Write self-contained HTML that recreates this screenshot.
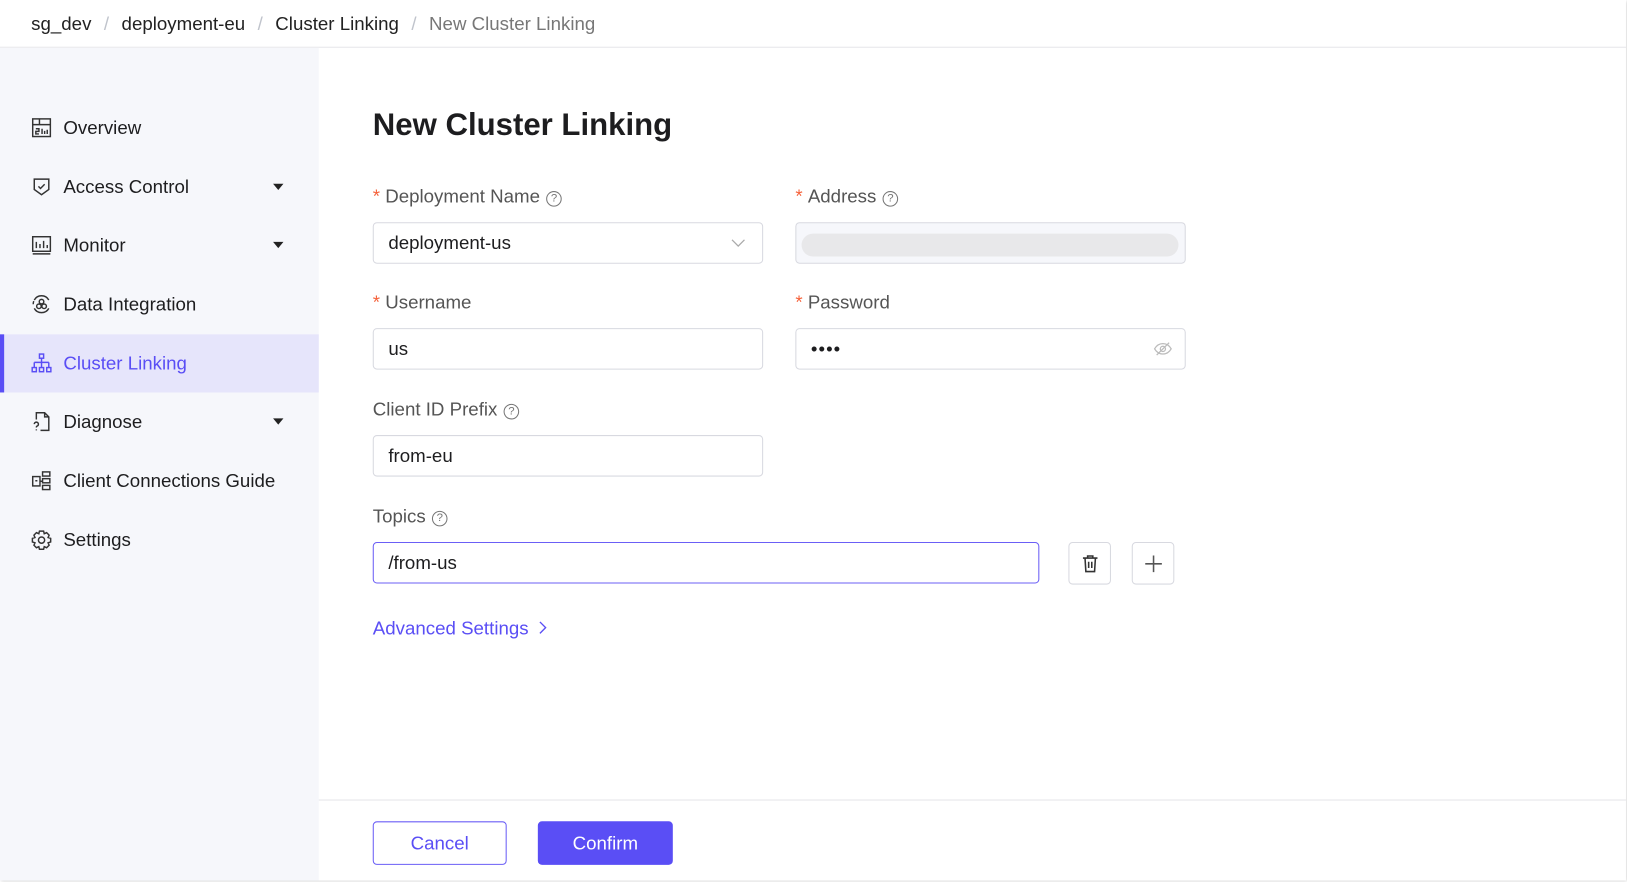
<!DOCTYPE html>
<html><head><meta charset="utf-8"><style>
*{box-sizing:border-box;margin:0;padding:0}
body{width:1627px;height:881px;background:#fff;font-family:"Liberation Sans",sans-serif;position:relative;overflow:hidden;color:#1d1d1f}
.wrap{position:absolute;left:0;top:0;width:1567px;height:849px;transform:scale(1.0383);transform-origin:0 0}
.page{position:absolute;left:0;top:0;width:1566px;height:848px;background:#fff;box-shadow:1px 1px 3px rgba(0,0,0,.18)}
.hdr{position:absolute;left:0;top:0;width:1566px;height:46px;border-bottom:1px solid #e6e6ea;font-size:18px;line-height:46px;padding-left:30px;color:#222}
.hdr .sep{color:#c0c4cc;margin:0 12px}
.hdr .cur{color:#777}
.side{position:absolute;left:0;top:46px;width:307px;height:802px;background:#f6f7fb}
.item{position:absolute;left:0;width:307px;height:56px;display:flex;align-items:center;font-size:18px;color:#1d1d1f}
.item svg{position:absolute;left:30px}
.item span{position:absolute;left:61px}
.item .car{position:absolute;left:263px;width:0;height:0;border-left:5px solid transparent;border-right:5px solid transparent;border-top:6px solid #222}
.item.act{background:#e6e5fb;color:#5a4ef5;border-left:4px solid #5a4ef5}
h1{position:absolute;left:359px;top:104px;font-size:30px;font-weight:bold;color:#1d1d1f}
.lbl{position:absolute;font-size:18px;color:#555}
.lbl .req{color:#f5613a;margin-right:5px}
.q{display:inline-block;width:15px;height:15px;border:1.3px solid #777;border-radius:50%;font-size:11px;line-height:13px;text-align:center;color:#777;margin-left:6px;vertical-align:1px}
.inp{position:absolute;height:40px;border:1px solid #d8d9e0;border-radius:4px;font-size:18px;line-height:38px;padding-left:14px;color:#1d1d1f}
.btn{position:absolute;border-radius:4px;text-align:center;font-size:18px}
</style></head><body>
<div class="wrap">
<div class="page">
<div class="hdr">sg_dev<span class="sep">/</span>deployment-eu<span class="sep">/</span>Cluster Linking<span class="sep">/</span><span class="cur">New Cluster Linking</span></div>
<div class="side">
 <div class="item" style="top:49px"><svg width="20" height="20" viewBox="0 0 20 20" fill="none" stroke="#333" stroke-width="1.4"><rect x="1.5" y="1.5" width="17" height="17"/><path d="M1.5 7h17M8 1.5v5.5M4.5 11h3v2.5h-3v2.5h3M10.5 11v5M13 13v3M15.5 12v4"/></svg><span>Overview</span></div>
 <div class="item" style="top:106px"><svg width="20" height="20" viewBox="0 0 20 20" fill="none" stroke="#333" stroke-width="1.4"><path d="M3 2.5h14v10l-7 5-7-5z"/><path d="M7 9.5l2 2 4-4"/></svg><span>Access Control</span><i class="car"></i></div>
 <div class="item" style="top:162px"><svg width="20" height="20" viewBox="0 0 20 20" fill="none" stroke="#333" stroke-width="1.4"><rect x="1.5" y="2" width="17" height="14"/><path d="M1.5 18.5h17M5 7v6M8.5 9v4M12 6v7M15.5 10v3"/></svg><span>Monitor</span><i class="car"></i></div>
 <div class="item" style="top:219px"><svg width="20" height="20" viewBox="0 0 20 20" fill="none" stroke="#333" stroke-width="1.4"><path d="M3 6a8 8 0 0 1 14 0M17 14a8 8 0 0 1-14 0M2 10a8 8 0 0 1 .5-3"/><circle cx="10" cy="7.5" r="2.2"/><circle cx="7.5" cy="12" r="2.2"/><circle cx="12.5" cy="12" r="2.2"/></svg><span>Data Integration</span></div>
 <div class="item act" style="top:276px"><svg style="left:26px" width="20" height="20" viewBox="0 0 20 20" fill="none" stroke="#5a4ef5" stroke-width="1.4"><rect x="8" y="1" width="4" height="4"/><path d="M10 5v4M3 9h14M3 9v5M10 9v5M17 9v5"/><rect x="1" y="14" width="4" height="4"/><rect x="8" y="14" width="4" height="4"/><rect x="15" y="14" width="4" height="4"/></svg><span style="left:57px">Cluster Linking</span></div>
 <div class="item" style="top:332px"><svg width="20" height="20" viewBox="0 0 20 20" fill="none" stroke="#333" stroke-width="1.4"><path d="M5 8V1.5h8l4 4v13H9M13 1.5v4h4"/><path d="M3 12.5a2 2 0 1 1 2.5 2c-.5.2-.5.6-.5 1.2M5 17.5v1"/></svg><span>Diagnose</span><i class="car"></i></div>
 <div class="item" style="top:389px"><svg width="20" height="20" viewBox="0 0 20 20" fill="none" stroke="#333" stroke-width="1.4"><rect x="1.5" y="6" width="7" height="9"/><rect x="11" y="1.5" width="7" height="4"/><rect x="11" y="8" width="7" height="4"/><rect x="11" y="14.5" width="7" height="4"/><path d="M8.5 10.5H11M4 10h2"/></svg><span>Client Connections Guide</span></div>
 <div class="item" style="top:446px"><svg width="20" height="20" viewBox="0 0 20 20" fill="none" stroke="#333" stroke-width="1.4"><path d="M8 1.5h4l.6 2.5 2.3-1 2.4 2.4-1 2.3 2.5.8v3.5l-2.5.8 1 2.3-2.4 2.4-2.3-1-.6 2.5H8l-.6-2.5-2.3 1-2.4-2.4 1-2.3L1.2 12V8.5l2.5-.8-1-2.3L5.1 3l2.3 1z"/><circle cx="10" cy="10.2" r="3"/></svg><span>Settings</span></div>
</div>
<h1>New Cluster Linking</h1>
<div class="lbl" style="left:359px;top:179px"><span class="req">*</span>Deployment Name<span class="q">?</span></div>
<div class="lbl" style="left:766px;top:179px"><span class="req">*</span>Address<span class="q">?</span></div>
<div class="inp" style="left:359px;top:214px;width:376px">deployment-us<svg style="position:absolute;right:16px;top:15px" width="14" height="8" viewBox="0 0 14 8" fill="none" stroke="#aaa" stroke-width="1.2"><path d="M1 1l6 6 6-6"/></svg></div>
<div class="inp" style="left:766px;top:214px;width:376px;background:#f6f7fb"><div style="position:absolute;left:5px;top:10px;width:363px;height:22px;border-radius:11px;background:#e8e8ea"></div></div>
<div class="lbl" style="left:359px;top:281px"><span class="req">*</span>Username</div>
<div class="lbl" style="left:766px;top:281px"><span class="req">*</span>Password</div>
<div class="inp" style="left:359px;top:316px;width:376px">us</div>
<div class="inp" style="left:766px;top:316px;width:376px;letter-spacing:1px">••••<svg style="position:absolute;right:12px;top:12px" width="18" height="14" viewBox="0 0 18 14" fill="none" stroke="#bbb" stroke-width="1.2"><path d="M1 7c2-3.5 5-5 8-5s6 1.5 8 5c-2 3.5-5 5-8 5S3 10.5 1 7z"/><circle cx="9" cy="7" r="2.5"/><path d="M3 13L15 1"/></svg></div>
<div class="lbl" style="left:359px;top:384px">Client ID Prefix<span class="q">?</span></div>
<div class="inp" style="left:359px;top:419px;width:376px">from-eu</div>
<div class="lbl" style="left:359px;top:487px">Topics<span class="q">?</span></div>
<div class="inp" style="left:359px;top:522px;width:642px;border-color:#6b5ff6;border-width:1.5px">/from-us</div>
<div class="btn" style="left:1029px;top:522px;width:41px;height:41px;border:1px solid #d8d9e0"><svg style="margin-top:11px" width="16" height="18" viewBox="0 0 16 18" fill="none" stroke="#333" stroke-width="1.5"><path d="M1 3.5h14M5.5 3.5V1.5h5v2M3 3.5l.8 13h8.4l.8-13M6.5 7v6M9.5 7v6"/></svg></div>
<div class="btn" style="left:1090px;top:522px;width:41px;height:41px;border:1px solid #d8d9e0"><svg style="margin-top:11px" width="18" height="18" viewBox="0 0 18 18" fill="none" stroke="#555" stroke-width="1.5"><path d="M9 1v16M1 9h16"/></svg></div>
<div style="position:absolute;left:359px;top:595px;font-size:18px;color:#5a4ef5">Advanced Settings<svg style="margin-left:10px" width="8" height="13" viewBox="0 0 8 13" fill="none" stroke="#5a4ef5" stroke-width="1.3"><path d="M1 1l5.5 5.5L1 12"/></svg></div>
<div style="position:absolute;left:307px;top:770px;width:1259px;height:1px;background:#e4e4e8"></div>
<div class="btn" style="left:359px;top:791px;width:129px;height:42px;border:1px solid #6b5ff6;color:#5a4ef5;line-height:40px">Cancel</div>
<div class="btn" style="left:518px;top:791px;width:130px;height:42px;background:#5a4ef5;color:#fff;line-height:42px">Confirm</div>
</div>
</div>
</body></html>
